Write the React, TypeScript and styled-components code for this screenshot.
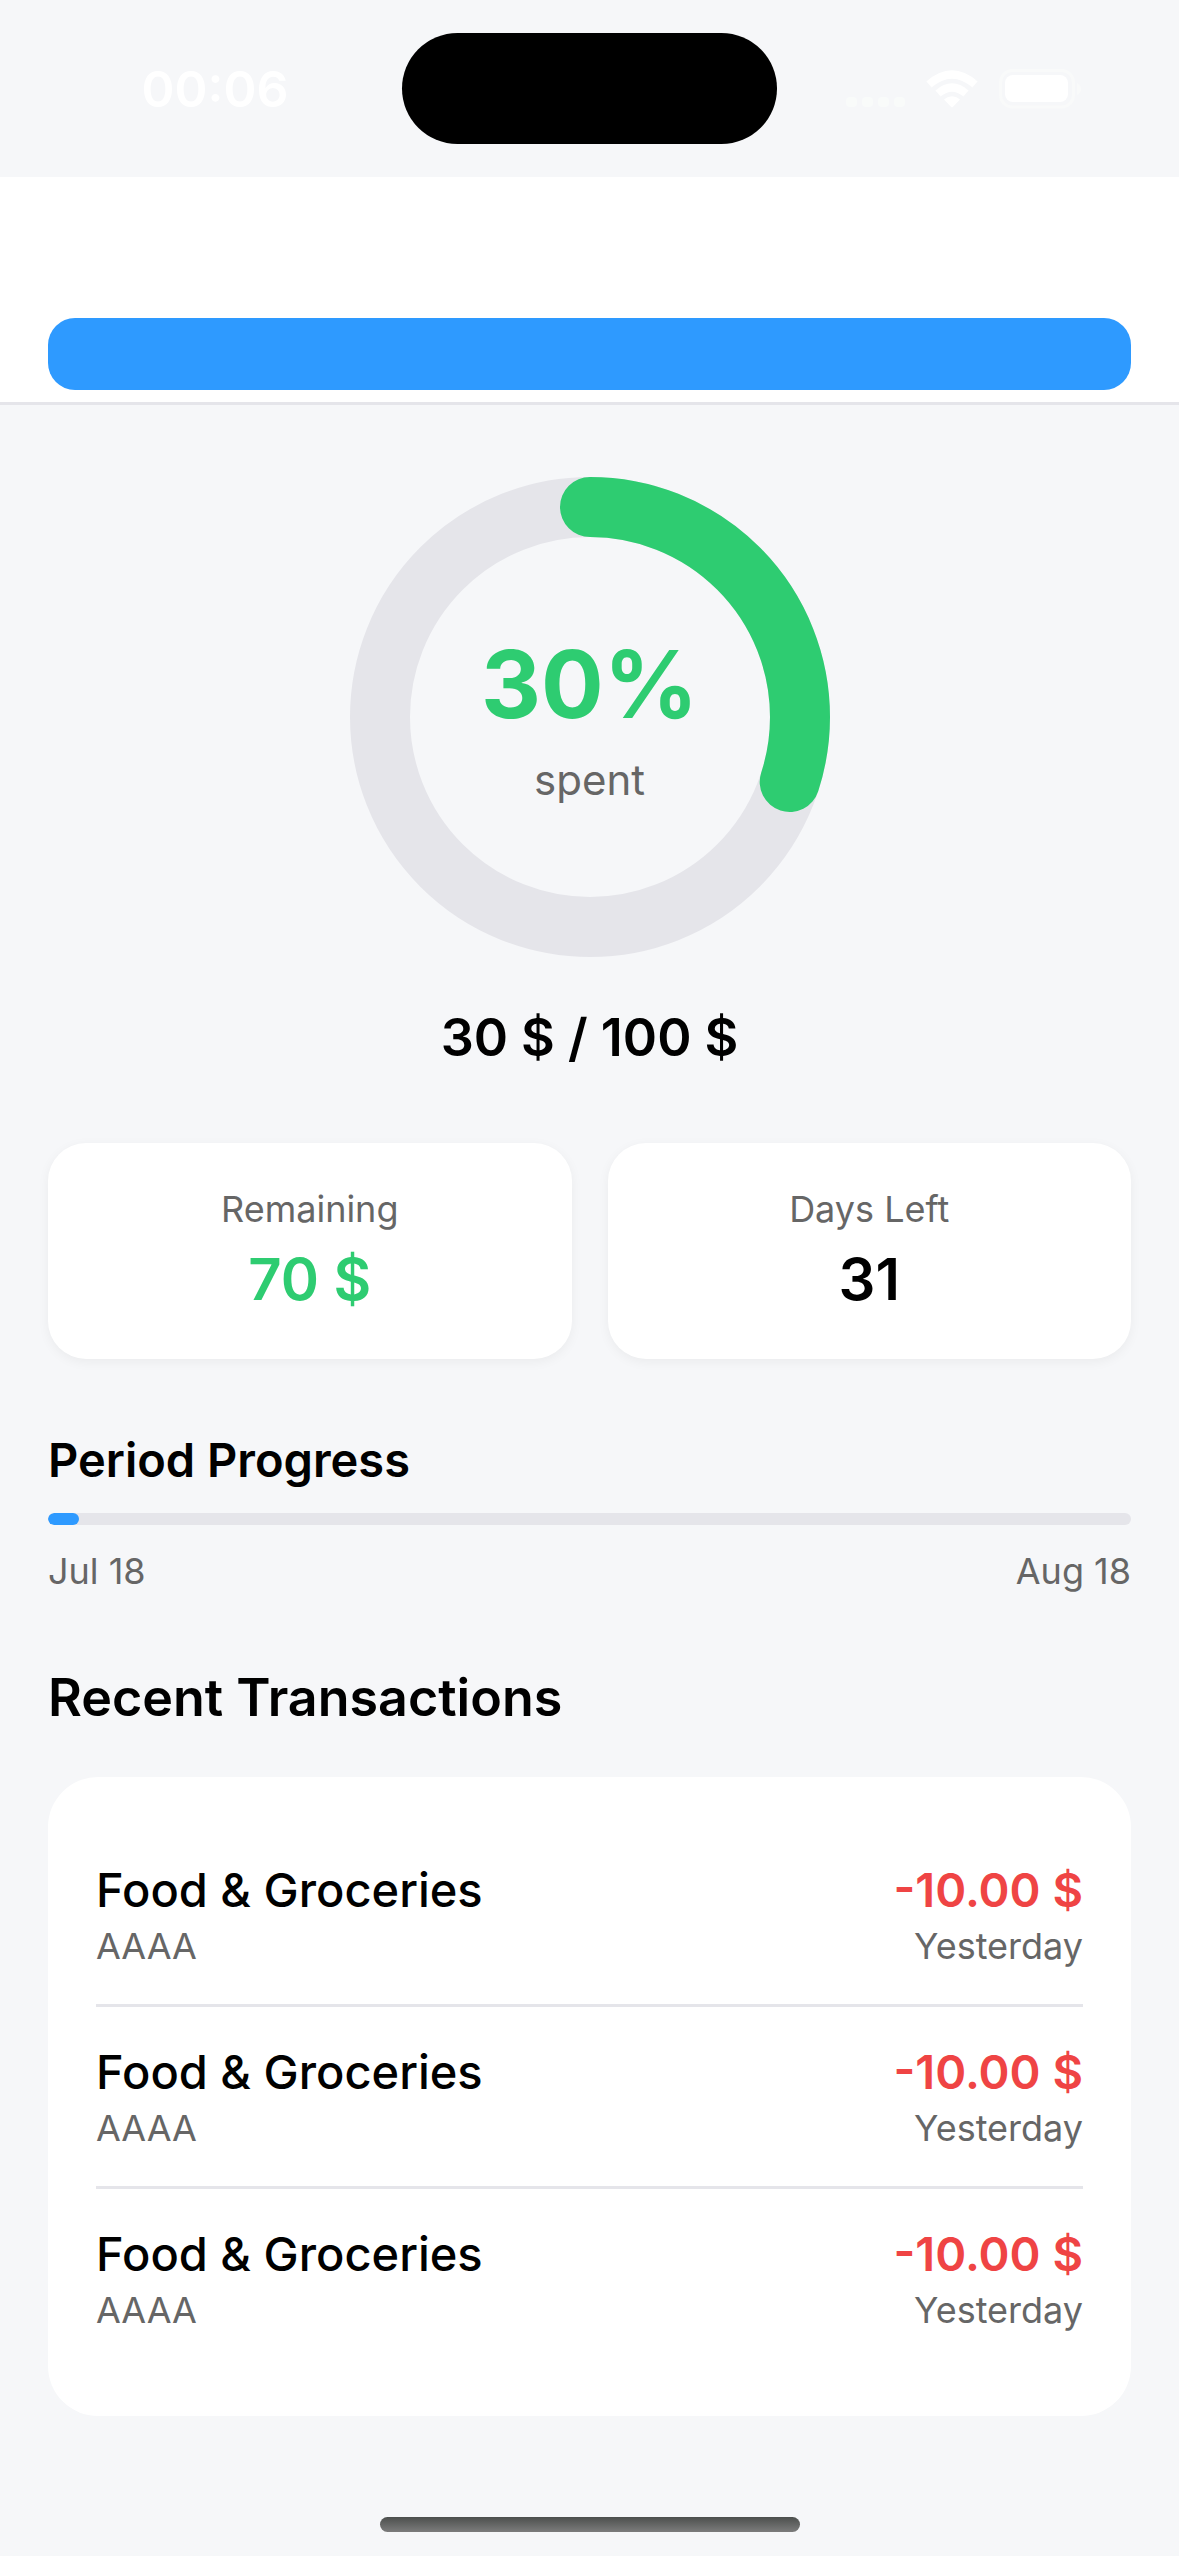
import React from "react";
import styled, { createGlobalStyle } from "styled-components";

const color = {
  page: "#f6f7f9",
  surface: "#ffffff",
  line: "#e5e5ea",
  blue: "#2e9aff",
  green: "#2ecc71",
  red: "#ef4444",
  text: "#000000",
  muted: "#666666",
};

const GlobalStyle = createGlobalStyle`
  *, *::before, *::after { box-sizing: border-box; }
  body {
    margin: 0;
    background: ${color.page};
    color: ${color.text};
    font-family: Inter, Roboto, "Liberation Sans", sans-serif;
  }
  h2, p, ul { margin: 0; padding: 0; }
`;

const Screen = styled.div`
  min-height: 100vh;
  display: flex;
  flex-direction: column;
`;

const StatusBar = styled.div`
  height: 177px;
  padding: 0 28px;
  display: grid;
  grid-template-columns: 1fr 375px 1fr;
  align-items: center;
  justify-items: center;
`;

const Clock = styled.time`
  color: ${color.surface};
  font-size: 50px;
  line-height: 62px;
  font-weight: 600;
`;

const Island = styled.div`
  width: 375px;
  height: 111px;
  border-radius: 56px;
  background: #000;
`;

const StatusIcons = styled.svg`
  width: 236px;
  height: 40px;
  display: block;
`;

const Header = styled.header`
  padding: 141px 48px 12px;
  background: ${color.surface};
  border-bottom: 3px solid ${color.line};
`;

const HeaderButton = styled.button`
  display: block;
  width: 100%;
  height: 72px;
  border: 0;
  border-radius: 27px;
  background: ${color.blue};
`;

const Content = styled.main`
  display: flex;
  flex-direction: column;
  gap: 72px;
  padding: 72px 48px 48px;
`;

const Summary = styled.section`
  display: flex;
  flex-direction: column;
  align-items: center;
  gap: 48px;
`;

const Ring = styled.div`
  display: grid;
  place-items: center;
  width: 480px;
  height: 480px;
  & > * { grid-area: 1 / 1; }
`;

const RingChart = styled.svg`
  width: 100%;
  height: 100%;
  display: block;
`;

const RingLabel = styled.div`
  display: flex;
  flex-direction: column;
  align-items: center;
  gap: 12px;
  padding-bottom: 4px;
`;

const Percent = styled.strong`
  color: ${color.green};
  font-size: 93px;
  line-height: 116px;
  font-weight: 700;
`;

const Spent = styled.span`
  color: ${color.muted};
  font-size: 42px;
  line-height: 51px;
`;

const Total = styled.p`
  font-size: 52px;
  line-height: 66px;
  font-weight: 600;
`;

const Stats = styled.section`
  display: grid;
  grid-template-columns: 1fr 1fr;
  gap: 36px;
`;

const StatCard = styled.div`
  display: flex;
  flex-direction: column;
  align-items: center;
  gap: 12px;
  padding: 44px 24px;
  border-radius: 38px;
  background: ${color.surface};
  box-shadow: 0 3px 12px rgba(0, 0, 0, 0.05);
`;

const Caption = styled.span`
  color: ${color.muted};
  font-size: 36px;
  line-height: 44px;
`;

const StatValue = styled.strong<{ $tone: string }>`
  color: ${(p) => p.$tone};
  font-size: 58px;
  line-height: 72px;
  font-weight: 600;
`;

const Period = styled.section`
  display: flex;
  flex-direction: column;
  gap: 24px;
`;

const PeriodTitle = styled.h2`
  font-size: 47px;
  line-height: 58px;
  font-weight: 600;
`;

const Track = styled.div`
  height: 12px;
  border-radius: 6px;
  background: ${color.line};
  overflow: hidden;
`;

const Fill = styled.div`
  height: 100%;
  border-radius: 6px;
  background: ${color.blue};
`;

const Spread = styled.div`
  display: flex;
  justify-content: space-between;
`;

const Recent = styled.section`
  display: flex;
  flex-direction: column;
  gap: 46px;
`;

const RecentTitle = styled.h2`
  font-size: 52px;
  line-height: 66px;
  font-weight: 600;
`;

const List = styled.ul`
  padding: 48px;
  border-radius: 50px;
  background: ${color.surface};
  list-style: none;
`;

const Row = styled.li`
  display: flex;
  justify-content: space-between;
  padding: 36px 0;
  & + & { border-top: 3px solid ${color.line}; }
`;

const Cell = styled.div<{ $end?: boolean }>`
  display: flex;
  flex-direction: column;
  align-items: ${(p) => (p.$end ? "flex-end" : "flex-start")};
  gap: 5px;
`;

const Category = styled.span`
  font-size: 47px;
  line-height: 58px;
  font-weight: 500;
`;

const Amount = styled.span`
  color: ${color.red};
  font-size: 47px;
  line-height: 58px;
  font-weight: 600;
`;

const HomeIndicator = styled.div`
  width: 420px;
  height: 15px;
  margin: auto auto 24px;
  border-radius: 8px;
  background: linear-gradient(#4c4f4d, #7c7c7c);
`;

const RADIUS = 210;
const LENGTH = 2 * Math.PI * RADIUS;

function SpendingRing({ percent }: { percent: number }) {
  return (
    <Ring>
      <RingChart viewBox="0 0 480 480" aria-hidden="true">
        <g fill="none" strokeWidth="60" transform="rotate(-90 240 240)">
          <circle cx="240" cy="240" r={RADIUS} stroke={color.line} />
          <circle
            cx="240"
            cy="240"
            r={RADIUS}
            stroke={color.green}
            strokeLinecap="round"
            strokeDasharray={`${(LENGTH * percent) / 100} ${LENGTH}`}
          />
        </g>
      </RingChart>
      <RingLabel>
        <Percent>{percent}%</Percent>
        <Spent>spent</Spent>
      </RingLabel>
    </Ring>
  );
}

function DeviceStatus() {
  return (
    <StatusIcons viewBox="0 0 236 40" aria-hidden="true">
      <g fill="#f9fbfa">
        {[0, 16, 32, 48].map((x) => (
          <rect key={x} x={x} y="28" width="11" height="10" rx="4" />
        ))}
      </g>
      <g fill="none" stroke="#fff" strokeWidth="8">
        <path d="M83 15.500Q106-4.500 129 15.500" />
        <path d="M92 24.500Q106 12.500 120 24.500" />
      </g>
      <path d="M98 30.500Q106 24 114 30.500L106.800 38Q106 38.600 105.200 38Z" fill="#fff" />
      <rect x="154.500" y="1.500" width="73" height="36.500" rx="12" fill="none" stroke="#f9fafa" strokeWidth="3" />
      <path d="M231 14Q235 16 235 20T231 26Z" fill="#f9fafa" />
      <rect x="159" y="6" width="63" height="27" rx="8" fill="#fff" />
    </StatusIcons>
  );
}

const transactions = [1, 2, 3].map((id) => ({
  id,
  category: "Food & Groceries",
  note: "AAAA",
  amount: "-10.00 $",
  date: "Yesterday",
}));

export default function App() {
  const elapsed = 2.9;
  return (
    <Screen>
      <GlobalStyle />
      <StatusBar>
        <Clock>00:06</Clock>
        <Island />
        <DeviceStatus />
      </StatusBar>
      <Header>
        <HeaderButton type="button" aria-label="Budget" />
      </Header>
      <Content>
        <Summary>
          <SpendingRing percent={30} />
          <Total>30 $ / 100 $</Total>
        </Summary>
        <Stats>
          <StatCard>
            <Caption>Remaining</Caption>
            <StatValue $tone={color.green}>70 $</StatValue>
          </StatCard>
          <StatCard>
            <Caption>Days Left</Caption>
            <StatValue $tone={color.text}>31</StatValue>
          </StatCard>
        </Stats>
        <Period>
          <PeriodTitle>Period Progress</PeriodTitle>
          <Track>
            <Fill style={{ width: `${elapsed}%` }} />
          </Track>
          <Spread>
            <Caption>Jul 18</Caption>
            <Caption>Aug 18</Caption>
          </Spread>
        </Period>
        <Recent>
          <RecentTitle>Recent Transactions</RecentTitle>
          <List>
            {transactions.map((t) => (
              <Row key={t.id}>
                <Cell>
                  <Category>{t.category}</Category>
                  <Caption>{t.note}</Caption>
                </Cell>
                <Cell $end>
                  <Amount>{t.amount}</Amount>
                  <Caption>{t.date}</Caption>
                </Cell>
              </Row>
            ))}
          </List>
        </Recent>
      </Content>
      <HomeIndicator />
    </Screen>
  );
}
